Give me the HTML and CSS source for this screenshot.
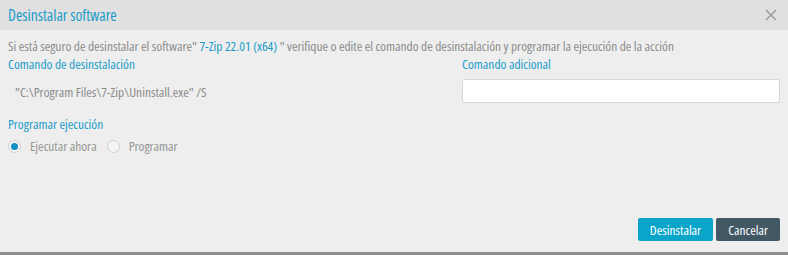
FILE: index.html
```html
<!DOCTYPE html>
<html lang="es">
<head>
    <meta charset="UTF-8">
    <title>Desinstalar software</title>
    <link rel="stylesheet" href="styles.css">
</head>
<body>
    <div class="dialog">
        <div class="dialog-header">
            <span class="dialog-title">Desinstalar software</span>
            <span class="dialog-close">
                <svg width="12" height="12" viewBox="0 0 12 12"><path d="M1 1L11 11M11 1L1 11" stroke="#9a9a9a" stroke-width="1.4" fill="none"/></svg>
            </span>
        </div>
        <div class="dialog-body">
            <p class="intro">Si está seguro de desinstalar el software" <span class="accent">7-Zip 22.01 (x64)</span> " verifique o edite el comando de desinstalación y programar la ejecución de la acción</p>
            <div class="columns">
                <div class="col">
                    <div class="label">Comando de desinstalación</div>
                    <div class="command">"C:\Program Files\7-Zip\Uninstall.exe" /S</div>
                </div>
                <div class="col">
                    <div class="label">Comando adicional</div>
                    <input class="text-input" type="text">
                </div>
            </div>
            <div class="label schedule-label">Programar ejecución</div>
            <div class="radios">
                <label class="radio"><span class="radio-dot checked"></span>Ejecutar ahora</label>
                <label class="radio"><span class="radio-dot"></span>Programar</label>
            </div>
        </div>
        <div class="dialog-footer">
            <button class="btn btn-primary">Desinstalar</button>
            <button class="btn btn-dark">Cancelar</button>
        </div>
    </div>
    <div class="page-strip"></div>
</body>
</html>
```

FILE: styles.css
```css
body {
    margin: 0;
    font-family: "Open Sans", sans-serif;
    font-stretch: condensed;
    background-color: #eeeeee;
    height: 255px;
    display: flex;
    flex-direction: column;
}
.dialog {
    flex: 1;
    display: flex;
    flex-direction: column;
}
.dialog-header {
    height: 30px;
    background-color: #e0e0e0;
    display: flex;
    align-items: center;
    justify-content: space-between;
    padding: 0 8px 0 8px;
}
.dialog-title {
    font-size: 15.5px;
    color: #1b9cc9;
}
.dialog-close {
    display: flex;
    margin-right: 3px;
}
.dialog-body {
    flex: 1;
    padding: 7px 8px 0 8px;
}
.intro {
    margin: 0;
    font-size: 13.4px;
    line-height: 18px;
    color: #8c8c8c;
}
.accent {
    color: #1b9cc9;
}
.columns {
    display: grid;
    grid-template-columns: 1fr 318px;
    gap: 12px;
}
.label {
    font-size: 13.4px;
    line-height: 18px;
    color: #1b9cc9;
}
.command {
    font-size: 13.4px;
    line-height: 18px;
    color: #8c8c8c;
    padding: 10px 0 0 7px;
}
.text-input {
    display: block;
    box-sizing: border-box;
    width: 100%;
    height: 24px;
    margin-top: 6px;
    border: 1px solid #d8d8d8;
    border-radius: 2px;
    background: #fff;
}
.schedule-label {
    margin-top: 12px;
}
.radios {
    display: flex;
    gap: 10px;
    margin-top: 4px;
}
.radio {
    display: flex;
    align-items: center;
    font-size: 13.4px;
    line-height: 18px;
    color: #959595;
}
.radio-dot {
    box-sizing: border-box;
    width: 13px;
    height: 13px;
    border: 1px solid #d0d0d0;
    border-radius: 50%;
    background: #f4f4f4;
    margin-right: 9px;
    position: relative;
}
.radio-dot.checked::after {
    content: "";
    position: absolute;
    left: 2px;
    top: 2px;
    width: 7px;
    height: 7px;
    border-radius: 50%;
    background: #0f8fc4;
}
.dialog-footer {
    display: flex;
    justify-content: flex-end;
    gap: 3px;
    padding: 0 8px 11px 0;
}
.btn {
    height: 23px;
    border: none;
    border-radius: 2px;
    font-family: inherit;
    font-stretch: condensed;
    font-size: 13.4px;
    color: #fff;
    padding: 0 12px;
}
.btn-primary {
    background-color: #0ba5c9;
}
.btn-dark {
    background-color: #425864;
}
.page-strip {
    height: 3px;
    background-color: #8e8e8e;
}
```
